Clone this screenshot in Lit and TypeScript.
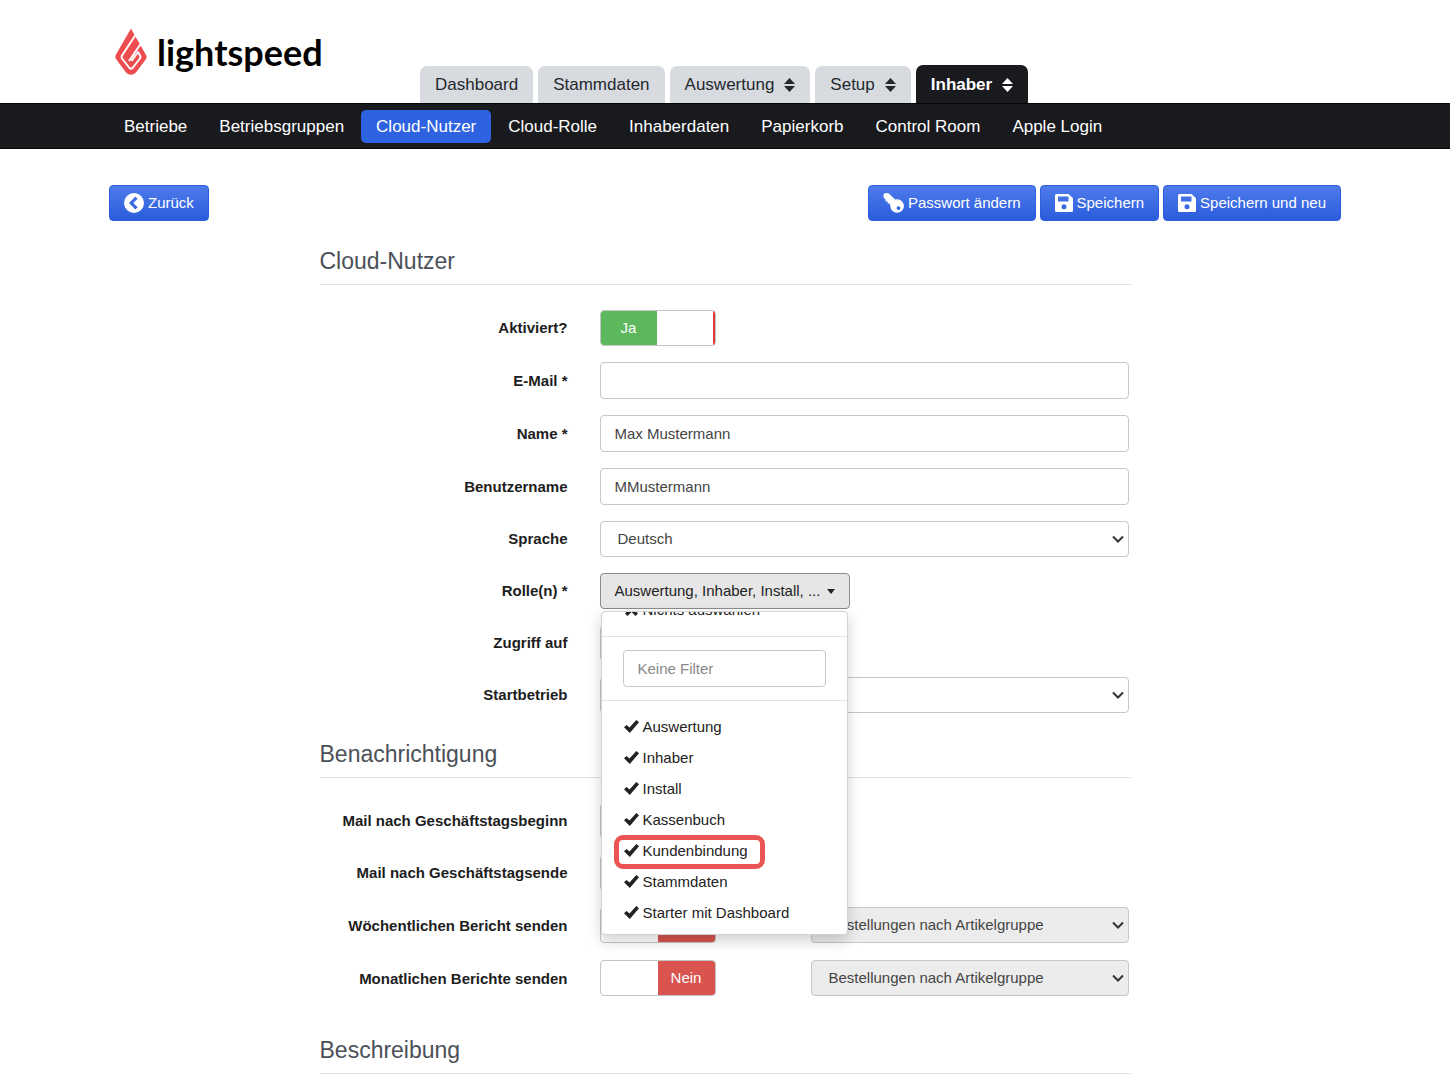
import { LitElement, html, css, svg, nothing } from "lit";
import { customElement, property, state } from "lit/decorators.js";
import { classMap } from "lit/directives/class-map.js";

const icons = {
  back: svg`<path fill-rule="evenodd" d="M10 0a10 10 0 1 0 0 20a10 10 0 0 0 0-20Zm1.4 3.6 2.2 2.2L9.4 10l4.2 4.2-2.2 2.2L5 10Z"/>`,
  key: svg`<path fill-rule="evenodd" d="M.5 1.500 2.300 0 5.500 .300 12.200 6.500A6.800 6.800 0 1 1 7.300 12.700L6.600 10.600 4.700 10.500 4.500 8.400 2.600 8.200 2.300 6 .6 4.700ZM15.500 13.200a1.900 1.900 0 1 0 0 3.800a1.900 1.900 0 0 0 0-3.800Z"/>`,
  save: svg`<path fill-rule="evenodd" d="M2.500 1H14.500L19 5.200V17.500Q19 19 17.500 19H2.500Q1 19 1 17.500V2.500Q1 1 2.500 1ZM4 3.500V8.500H14.500V3.500ZM10 11.300a2.500 2.500 0 1 0 0 5a2.500 2.500 0 0 0 0-5Z"/>`,
};

const sortIcon = html`<svg class="sort" viewBox="0 0 11 14" aria-hidden="true"><path d="M5.500 0 11 6H0ZM0 8H11L5.500 14Z" /></svg>`;
const checkIcon = html`<svg class="check" viewBox="0 0 15 13" aria-hidden="true"><path d="M0 7.300 2.500 5 5.500 7.600 12.300 0 15 2.200 5.800 13Z" /></svg>`;
const crossIcon = html`<svg class="check" viewBox="0 0 15 13" aria-hidden="true"><path d="M1 2.500 3.500 0 7.500 4 11.500 0 14 2.500 10 6.500 14 10.500 11.500 13 7.500 9 3.500 13 1 10.500 5 6.500Z" /></svg>`;

@customElement("switch-box")
class SwitchBox extends LitElement {
  @property() label = "";
  @property({ type: Boolean }) on = false;

  static styles = css`
    :host { display: block; }
    .switch {
      position: relative;
      display: flex;
      box-sizing: border-box;
      width: 116px;
      height: 36px;
      border: 1px solid #c4c4c4;
      border-radius: 4px;
      overflow: hidden;
      background: #fff;
      color: #fff;
      font-size: 15px;
      line-height: 34px;
      text-align: center;
    }
    .half { flex: 1; }
    .switch.on .yes { background: #5cb85c; }
    .switch.on .no { border-right: 2px solid #e03b3b; }
    .switch:not(.on) .no { background: #d9534f; }
    input { position: absolute; inset: 0; margin: 0; opacity: 0; width: 100%; height: 100%; }
  `;

  render() {
    return html`<label class=${classMap({ switch: true, on: this.on })}>
      <input
        type="checkbox"
        aria-label=${this.label}
        .checked=${this.on}
        @change=${(e: Event) => (this.on = (e.target as HTMLInputElement).checked)}
      />
      <span class="half yes">${this.on ? "Ja" : nothing}</span>
      <span class="half no">${this.on ? nothing : "Nein"}</span>
    </label>`;
  }
}

@customElement("app-root")
class AppRoot extends LitElement {
  @state() private roles = ["Auswertung", "Inhaber", "Install", "Kassenbuch", "Kundenbindung", "Stammdaten", "Starter mit Dashboard"];

  private tabs = [
    { text: "Dashboard" },
    { text: "Stammdaten" },
    { text: "Auswertung", menu: true },
    { text: "Setup", menu: true },
    { text: "Inhaber", menu: true, active: true },
  ];

  private links = ["Betriebe", "Betriebsgruppen", "Cloud-Nutzer", "Cloud-Rolle", "Inhaberdaten", "Papierkorb", "Control Room", "Apple Login"];

  static styles = css`
    :host {
      display: block;
      font-family: "Liberation Sans", Arial, sans-serif;
      font-size: 15px;
      line-height: 20px;
      color: #222;
      background: #fff;
    }
    *, *::after { box-sizing: border-box; }
    a { color: inherit; text-decoration: none; }
    .wrap { max-width: 1232px; margin: 0 auto; }

    .head { display: flex; height: 103px; }
    .brand {
      flex: 0 0 311px;
      display: flex;
      align-items: flex-start;
      gap: 10px;
      padding: 28px 0 0 6px;
      color: #000;
      font-family: Lato, "Liberation Sans", sans-serif;
      font-size: 36px;
      line-height: 48px;
      font-weight: 700;
    }
    .flame { width: 32px; height: 48px; }
    .tabs { display: flex; align-items: flex-end; gap: 5px; font-size: 17px; }
    .tab {
      display: flex;
      align-items: center;
      gap: 10px;
      height: 37px;
      padding: 0 15px;
      border-radius: 7px 7px 0 0;
      background: #d7dbe0;
      color: #25282d;
    }
    .tab.active { height: 38px; padding-top: 2px; background: #191a1e; color: #fff; font-weight: 700; }
    .sort { width: 11px; height: 14px; fill: currentColor; }

    .bar { background: #191a1e; border: solid #050506; border-width: 1px 0; }
    .links { display: flex; align-items: center; gap: 2px; height: 44px; font-size: 17px; color: #fff; }
    .link { padding: 0 15px; line-height: 33px; border-radius: 5px; }
    .link.active { background: #2e62e0; }

    .actions { display: flex; gap: 4px; padding-top: 36px; }
    .push { margin-left: auto; }
    .btn {
      display: flex;
      align-items: center;
      gap: 4px;
      height: 36px;
      padding: 0 14px;
      border: 1px solid #2d60de;
      border-radius: 4px;
      background: linear-gradient(#4f7bea, #2a5cdc);
      color: #fff;
      font: inherit;
    }
    .icon { width: 20px; height: 20px; fill: currentColor; }
    .key { width: 21px; }
    .save { width: 18px; }

    .form { max-width: 811px; margin: 0 auto; }
    .title {
      margin: 0 0 25px;
      padding: 24px 0 7px;
      border-bottom: 1px solid #e3e3e3;
      font-size: 23px;
      line-height: 32px;
      font-weight: 400;
      color: #4b5058;
    }
    .later { padding-top: 25px; }
    .last { padding-top: 37px; margin-bottom: 0; }
    .rows { display: grid; gap: 16px; }
    .row { display: grid; grid-template-columns: 248px 1fr; column-gap: 32px; align-items: center; padding-right: 2px; }
    .name { text-align: right; font-weight: 700; color: #1d1d1d; }
    .text, .select {
      display: block;
      width: 100%;
      border: 1px solid #c6c6c6;
      border-radius: 4px;
      background: #fff;
      color: #444;
      font: inherit;
    }
    .text { height: 37px; padding: 0 14px; }
    .text::placeholder { color: #888; opacity: 1; }
    .pick { position: relative; }
    .select { height: 36px; padding: 0 17px; appearance: none; }
    .select:disabled { background: #ececec; opacity: 1; }
    .arrow { position: absolute; right: 5px; top: 14px; width: 12px; height: 8px; fill: none; stroke: #333; stroke-width: 2; pointer-events: none; }
    .report { display: grid; grid-template-columns: 195px 1fr; gap: 16px; min-height: 37px; }

    .drop { position: relative; width: 250px; }
    .opener {
      display: flex;
      align-items: center;
      justify-content: space-between;
      width: 100%;
      height: 36px;
      padding: 0 14px;
      border: 1px solid #8c8c8c;
      border-radius: 4px;
      background: #e6e6e6;
      color: #222;
      font: inherit;
      white-space: nowrap;
    }
    .closed { width: 247px; background: #fff; border-color: #c6c6c6; }
    .caret { width: 8px; height: 5px; fill: currentColor; }
    .menu {
      position: absolute;
      z-index: 2;
      top: calc(100% + 2px);
      left: 1px;
      width: 247px;
      border: 1px solid #d2d2d2;
      border-radius: 4px;
      background: #fff;
      box-shadow: 0 6px 14px rgba(0, 0, 0, 0.18);
      overflow: hidden;
    }
    .item {
      display: flex;
      align-items: center;
      gap: 4px;
      width: 100%;
      height: 31px;
      padding: 0 22px;
      border: 0;
      background: none;
      color: #222;
      font: inherit;
      white-space: nowrap;
    }
    .check { width: 15px; height: 13px; fill: #222; }
    .scrolled { margin-top: -18px; }
    .filter { margin-top: 11px; padding: 13px 21px; border: solid #e3e3e3; border-width: 1px 0; }
    .items { padding: 10px 0 6px; }
    .marked { position: relative; }
    .marked::after {
      content: "";
      position: absolute;
      top: 0;
      left: 12px;
      width: 151px;
      height: 34px;
      border: 5px solid #ec5355;
      border-radius: 9px;
    }
  `;

  private arrow() {
    return html`<svg class="arrow" viewBox="0 0 12 8" aria-hidden="true"><path d="M1 1.500 6 6.500 11 1.500" /></svg>`;
  }

  private opener(id: string, text: string, open = false) {
    return html`<button class=${classMap({ opener: true, closed: !open })} id=${id} type="button" aria-expanded=${open}>
      <span>${text}</span>
      <svg class="caret" viewBox="0 0 8 5" aria-hidden="true"><path d="M0 0H8L4 5Z" /></svg>
    </button>`;
  }

  private textRow(id: string, label: string, value: string, type = "text") {
    return html`<div class="row">
      <label class="name" for=${id}>${label}</label>
      <input class="text" id=${id} type=${type} .value=${value} />
    </div>`;
  }

  private selectRow(id: string, label: string, value: string) {
    return html`<div class="row">
      <label class="name" for=${id}>${label}</label>
      <div class="pick">
        <select class="select" id=${id}><option>${value}</option></select>
        ${this.arrow()}
      </div>
    </div>`;
  }

  private switchRow(label: string, on = false, report = "") {
    return html`<div class="row">
      <span class="name">${label}</span>
      ${report
        ? html`<div class="report">
            <switch-box .label=${label} .on=${on}></switch-box>
            <div class="pick">
              <select class="select" aria-label=${label} disabled><option>${report}</option></select>
              ${this.arrow()}
            </div>
          </div>`
        : html`<switch-box .label=${label} .on=${on}></switch-box>`}
    </div>`;
  }

  render() {
    return html`
      <header>
        <div class="wrap head">
          <a class="brand" href="#">
            <svg class="flame" viewBox="0 0 32 48" aria-hidden="true">
              <path fill="#ee4d50" d="M16 .5 19.500 7 24.500 15.500 31 27Q32.300 29 31 31L21 44.500Q16 49 11 44.500L1 31Q-.3 29 1 26.500Z" />
              <path fill="none" stroke="#fff" stroke-width="2" stroke-linejoin="round" d="M20.500 7 7 27.500Q6 29 7 30.500L14.500 40Q16 41.500 17.500 40L25 30.500Q26 29 25 27.500L23 24 16.500 33" />
              <path fill="none" stroke="#fff" stroke-width="2" d="M26 15.500 14 33" />
            </svg>
            <span>lightspeed</span>
          </a>
          <nav class="tabs" aria-label="Bereiche">
            ${this.tabs.map(
              (t) => html`<a class=${classMap({ tab: true, active: !!t.active })} href="#">${t.text}${t.menu ? sortIcon : nothing}</a>`
            )}
          </nav>
        </div>
        <div class="bar">
          <nav class="wrap links" aria-label="Inhaber">
            ${this.links.map((l) => html`<a class=${classMap({ link: true, active: l === "Cloud-Nutzer" })} href="#">${l}</a>`)}
          </nav>
        </div>
      </header>
      <main class="wrap">
        <div class="actions">
          <button class="btn" type="button"><svg class="icon" viewBox="0 0 20 20" aria-hidden="true">${icons.back}</svg>Zurück</button>
          <button class="btn push" type="button"><svg class="icon key" viewBox="0 0 21 20" aria-hidden="true">${icons.key}</svg>Passwort ändern</button>
          <button class="btn" type="button"><svg class="icon save" viewBox="1 0 18 20" aria-hidden="true">${icons.save}</svg>Speichern</button>
          <button class="btn" type="button"><svg class="icon save" viewBox="1 0 18 20" aria-hidden="true">${icons.save}</svg>Speichern und neu</button>
        </div>
        <form class="form">
          <h2 class="title">Cloud-Nutzer</h2>
          <div class="rows">
            ${this.switchRow("Aktiviert?", true)} ${this.textRow("email", "E-Mail *", "", "email")}
            ${this.textRow("name", "Name *", "Max Mustermann")} ${this.textRow("user", "Benutzername", "MMustermann")}
            ${this.selectRow("lang", "Sprache", "Deutsch")}
            <div class="row">
              <label class="name" for="roles">Rolle(n) *</label>
              <div class="drop">
                ${this.opener("roles", "Auswertung, Inhaber, Install, ...", true)}
                <div class="menu">
                  <button class="item scrolled" type="button">${crossIcon}Nichts auswählen</button>
                  <div class="filter"><input class="text" type="text" aria-label="Filter" placeholder="Keine Filter" /></div>
                  <div class="items">
                    ${this.roles.map(
                      (r) => html`<button class=${classMap({ item: true, marked: r === "Kundenbindung" })} type="button">${checkIcon}${r}</button>`
                    )}
                  </div>
                </div>
              </div>
            </div>
            <div class="row">
              <label class="name" for="access">Zugriff auf</label>
              <div class="drop">${this.opener("access", "")}</div>
            </div>
            ${this.selectRow("start", "Startbetrieb", "")}
          </div>
          <h2 class="title later">Benachrichtigung</h2>
          <div class="rows">
            ${this.switchRow("Mail nach Geschäftstagsbeginn")} ${this.switchRow("Mail nach Geschäftstagsende")}
            ${this.switchRow("Wöchentlichen Bericht senden", false, "Bestellungen nach Artikelgruppe")}
            ${this.switchRow("Monatlichen Berichte senden", false, "Bestellungen nach Artikelgruppe")}
          </div>
          <h2 class="title last">Beschreibung</h2>
        </form>
      </main>
    `;
  }
}
